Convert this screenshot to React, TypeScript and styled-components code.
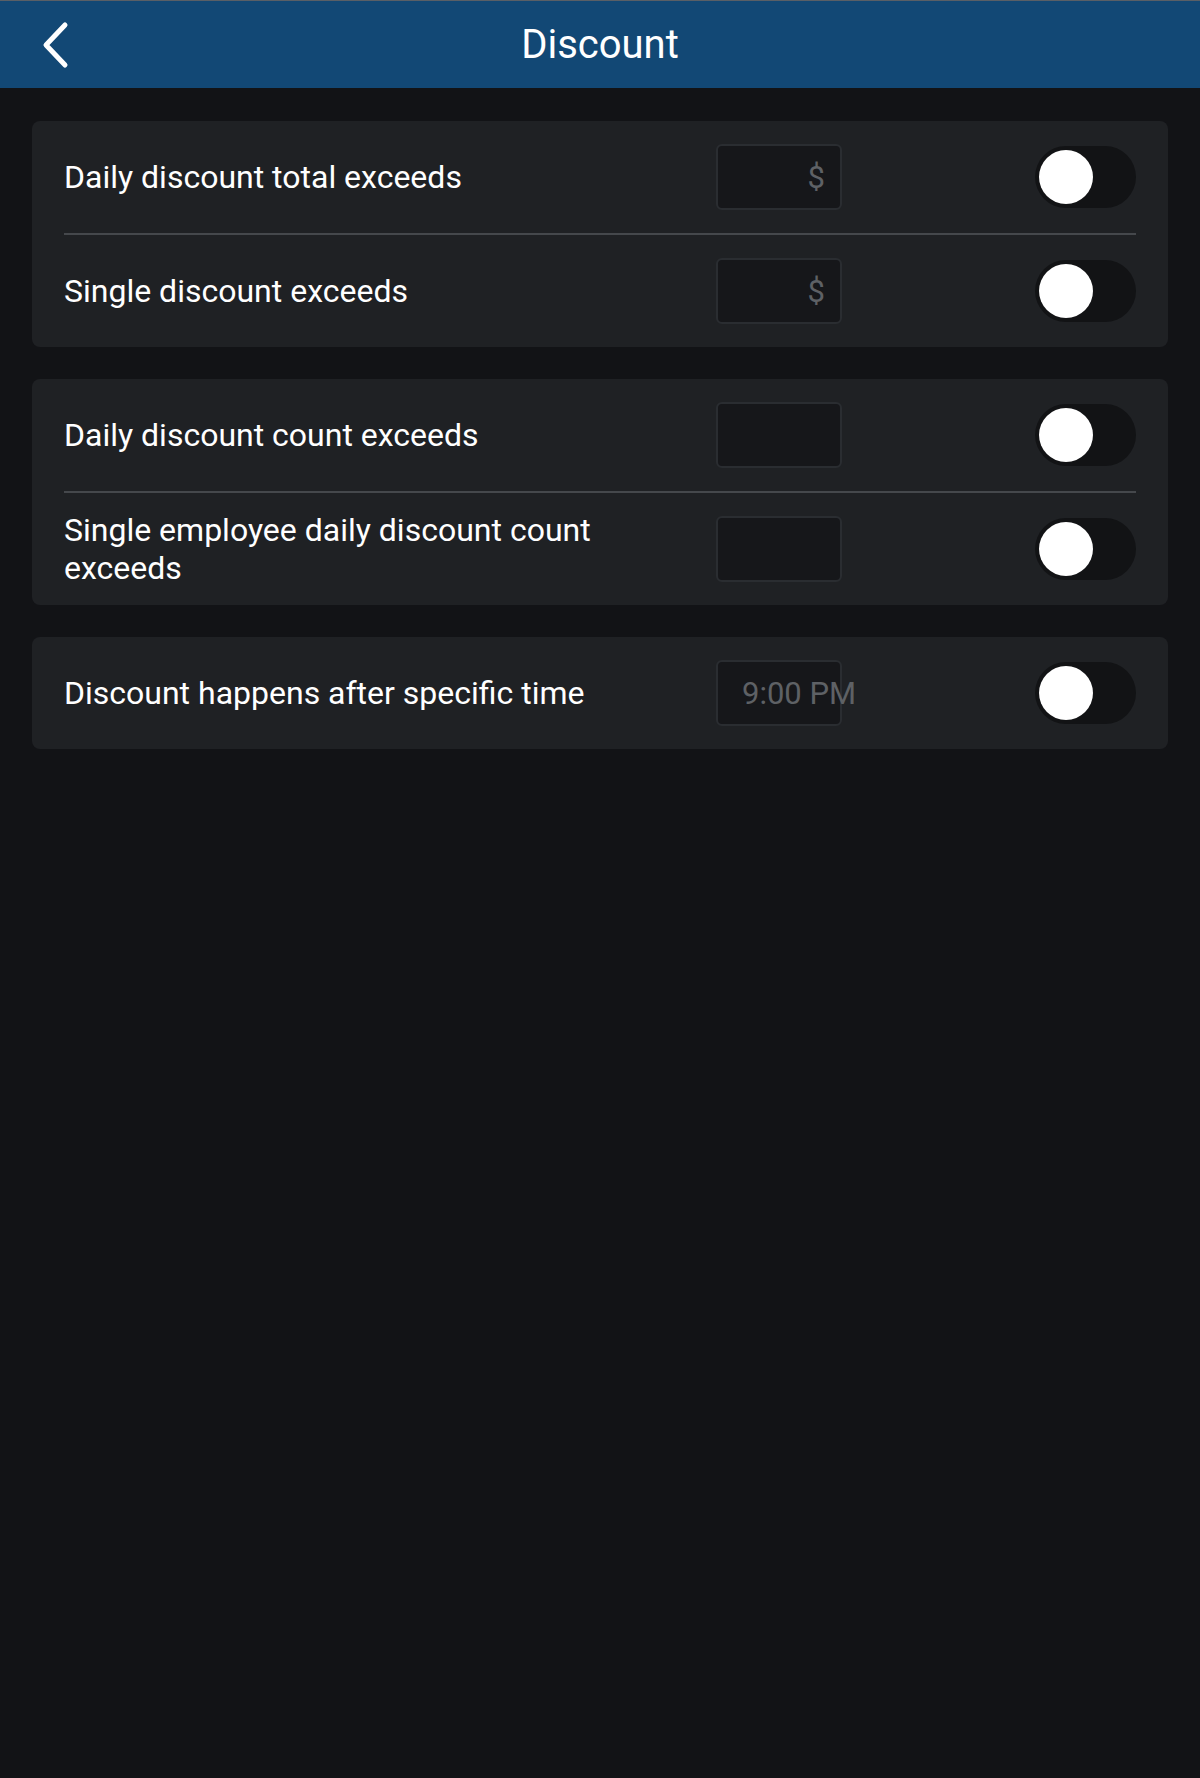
import React from "react";
import styled, { createGlobalStyle } from "styled-components";

const GlobalStyle = createGlobalStyle`
  html, body {
    margin: 0;
    padding: 0;
    background: #121316;
  }
  body {
    font-family: Roboto, "Noto Sans", "Liberation Sans", sans-serif;
    -webkit-font-smoothing: antialiased;
  }
  * { box-sizing: border-box; }
`;

const Page = styled.div`
  min-height: 1778px;
  background: #121316;
  color: #ffffff;
`;

const Header = styled.header`
  height: 88px;
  background: #124875;
  border-top: 1px solid #5a5f66;
  display: grid;
  grid-template-columns: 1fr auto 1fr;
  align-items: center;
`;

const BackButton = styled.button`
  justify-self: start;
  margin-left: 36px;
  width: 38px;
  height: 50px;
  padding: 0;
  border: none;
  background: transparent;
  display: flex;
  align-items: center;
  justify-content: center;
  cursor: pointer;
`;

const Title = styled.h1`
  margin: 0;
  font-size: 40px;
  font-weight: 400;
  color: #ffffff;
  letter-spacing: 0;
`;

const Content = styled.main`
  padding: 33px 32px;
  display: flex;
  flex-direction: column;
  gap: 32px;
`;

const Card = styled.section`
  background: #1f2124;
  border-radius: 8px;
  padding: 0 32px;
`;

const Row = styled.div<{ $divider?: boolean }>`
  min-height: ${(p) => (p.$divider ? "114px" : "112px")};
  display: grid;
  grid-template-columns: minmax(0, 1fr) 126px 294px;
  align-items: center;
  border-top: ${(p) => (p.$divider ? "2px solid #45484c" : "none")};
`;

const Label = styled.div`
  padding-right: 40px;
  font-size: 32px;
  line-height: 38px;
  color: #ffffff;
`;

const InputBox = styled.div<{ $align?: "left" | "right" }>`
  width: 126px;
  height: 66px;
  border: 2px solid #2a2d31;
  border-radius: 6px;
  background: #16171a;
  display: flex;
  align-items: center;
  justify-content: ${(p) => (p.$align === "left" ? "flex-start" : "flex-end")};
  padding: ${(p) => (p.$align === "left" ? "0 0 0 24px" : "0 15px 0 0")};
  font-size: 31px;
  color: #5e6165;
  white-space: nowrap;
  overflow: visible;
`;

const Toggle = styled.div`
  justify-self: end;
  width: 101px;
  height: 62px;
  border-radius: 31px;
  background: #121315;
  display: flex;
  align-items: center;
  padding: 0 4px;
`;

const Knob = styled.span`
  width: 54px;
  height: 54px;
  border-radius: 50%;
  background: #ffffff;
`;

type Item = { label: string; value?: string; align?: "left" | "right" };

const groups: Item[][] = [
  [
    { label: "Daily discount total exceeds", value: "$", align: "right" },
    { label: "Single discount exceeds", value: "$", align: "right" },
  ],
  [
    { label: "Daily discount count exceeds" },
    { label: "Single employee daily discount count exceeds" },
  ],
  [{ label: "Discount happens after specific time", value: "9:00 PM", align: "left" }],
];

export default function App() {
  return (
    <Page>
      <GlobalStyle />
      <Header>
        <BackButton aria-label="Back">
          <svg width="30" height="48" viewBox="0 0 30 48" fill="none">
            <path
              d="M25 4 L6 24 L25 44"
              stroke="#ffffff"
              strokeWidth="5"
              strokeLinecap="round"
              strokeLinejoin="round"
            />
          </svg>
        </BackButton>
        <Title>Discount</Title>
        <span />
      </Header>
      <Content>
        {groups.map((g, gi) => (
          <Card key={gi}>
            {g.map((item, i) => (
              <Row key={i} $divider={i > 0}>
                <Label>{item.label}</Label>
                <InputBox $align={item.align}>{item.value}</InputBox>
                <Toggle>
                  <Knob />
                </Toggle>
              </Row>
            ))}
          </Card>
        ))}
      </Content>
    </Page>
  );
}
